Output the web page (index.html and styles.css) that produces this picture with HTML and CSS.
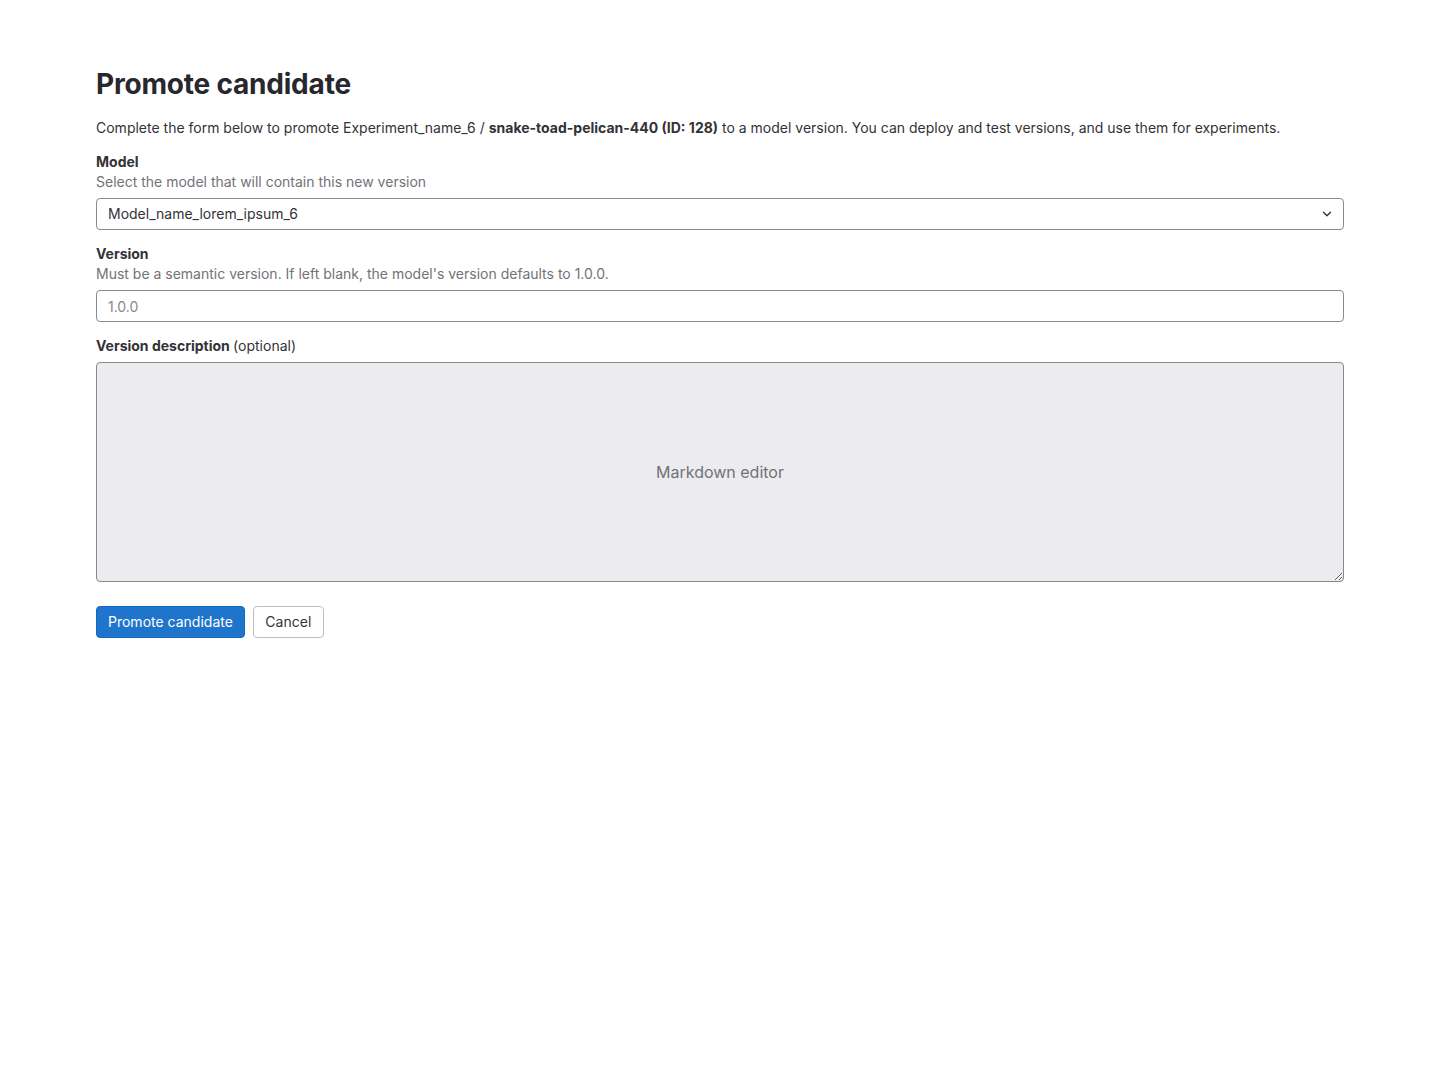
FILE: index.html
```html
<!DOCTYPE html>
<html lang="en">
<head>
<meta charset="utf-8">
<title>Promote candidate</title>
<link rel="stylesheet" href="styles.css">
</head>
<body>
<main class="page">
  <h1 class="title">Promote candidate</h1>
  <p class="intro">Complete the form below to promote Experiment_name_6 / <strong>snake-toad-pelican-440 (ID: 128)</strong> to a model version. You can deploy and test versions, and use them for experiments.</p>
  <form class="form">
    <div class="field">
      <label class="label">Model</label>
      <div class="hint">Select the model that will contain this new version</div>
      <div class="select">
        <span>Model_name_lorem_ipsum_6</span>
        <svg class="chevron" width="16" height="16" viewBox="0 0 16 16"><path d="M4.5 6.25 8 9.75l3.5-3.5" fill="none" stroke="#333238" stroke-width="1.4" stroke-linecap="round" stroke-linejoin="round"/></svg>
      </div>
    </div>
    <div class="field">
      <label class="label">Version</label>
      <div class="hint">Must be a semantic version. If left blank, the model's version defaults to 1.0.0.</div>
      <input class="input" type="text" placeholder="1.0.0">
    </div>
    <div class="field">
      <label class="label">Version description <span class="optional">(optional)</span></label>
      <div class="editor">Markdown editor</div>
    </div>
    <div class="actions">
      <button type="button" class="btn btn-primary">Promote candidate</button>
      <button type="button" class="btn btn-default">Cancel</button>
    </div>
  </form>
</main>
</body>
</html>
```

FILE: styles.css
```css
* { box-sizing: border-box; }
html, body { margin: 0; padding: 0; background: #fff; }
body {
  font-family: Inter, "Noto Sans", "Liberation Sans", sans-serif;
  font-size: 14px;
  line-height: 20px;
  color: #333238;
}
.page {
  padding: 66px 96px 0 96px;
}
.title {
  margin: 0 0 16px 0;
  font-size: 28px;
  line-height: 36px;
  font-weight: 700;
  color: #28272d;
  letter-spacing: -0.2px;
}
.intro {
  margin: 0 0 14px 0;
}
.intro strong { font-weight: 700; }
.form { display: flex; flex-direction: column; }
.field { display: flex; flex-direction: column; margin-bottom: 14px; }
.label { font-weight: 700; line-height: 20px; }
.optional { font-weight: 400; }
.hint { color: #737278; }
.select {
  margin-top: 6px;
  height: 32px;
  border: 1px solid #89888d;
  border-radius: 4px;
  display: flex;
  align-items: center;
  justify-content: space-between;
  padding: 0 8px 0 11px;
}
.chevron { display: block; }
.input {
  margin-top: 6px;
  height: 32px;
  border: 1px solid #89888d;
  border-radius: 4px;
  padding: 0 11px;
  font: inherit;
  color: #333238;
  outline: none;
}
.input::placeholder { color: #89888d; }
.editor {
  margin-top: 6px;
  height: 220px;
  background: #ececef;
  border: 1px solid #89888d;
  border-radius: 4px;
  display: flex;
  align-items: center;
  justify-content: center;
  color: #737278;
  font-size: 16px;
  resize: vertical;
  overflow: hidden;
}
.actions { display: flex; gap: 8px; margin-top: 10px; }
.btn {
  height: 32px;
  font: inherit;
  border-radius: 4px;
  padding: 0 11px;
  cursor: pointer;
}
.btn-primary {
  background: #1f75cb;
  border: 1px solid #1068bf;
  color: #fff;
}
.btn-default {
  background: #fff;
  border: 1px solid #bfbfc3;
  color: #333238;
  padding: 0 11.5px;
}
```
